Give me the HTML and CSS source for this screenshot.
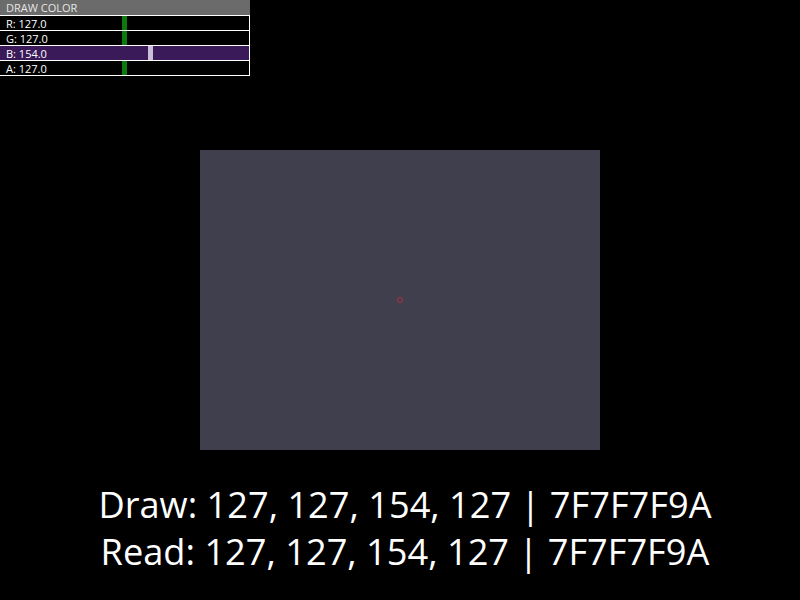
FILE: index.html
```html
<!DOCTYPE html>
<html>
<head>
<meta charset="utf-8">
<link rel="stylesheet" href="styles.css">
</head>
<body>
<div class="screen">
  <div class="panel">
    <div class="panel-title">DRAW COLOR</div>
    <div class="row"><span class="label">R: 127.0</span><span class="knob green" style="left:122px"></span></div>
    <div class="row"><span class="label">G: 127.0</span><span class="knob green" style="left:122px"></span></div>
    <div class="row active"><span class="label">B: 154.0</span><span class="knob light" style="left:148px"></span></div>
    <div class="row"><span class="label">A: 127.0</span><span class="knob green" style="left:122px"></span></div>
  </div>
  <div class="stage">
    <div class="canvas"><div class="cursor"></div></div>
  </div>
  <div class="readout">
    <div class="line">Draw: 127, 127, 154, 127 | 7F7F7F9A</div>
    <div class="line">Read: 127, 127, 154, 127 | 7F7F7F9A</div>
  </div>
</div>
</body>
</html>
```
FILE: styles.css
```css
html, body { margin: 0; padding: 0; background: #000; }
.screen {
  width: 800px; height: 600px; position: relative; overflow: hidden;
  font-family: "Open Sans", "Noto Sans", sans-serif; color: #fff;
}
.panel {
  position: absolute; left: 0; top: 0; width: 250px;
  display: flex; flex-direction: column;
}
.panel-title {
  height: 15px; background: #6b6b6b; color: #e6e6e6;
  font-size: 11px; line-height: 15px; padding-left: 6px;
}
.row {
  position: relative; height: 14px; border-top: 1px solid #fff;
  border-right: 1px solid #fff; background: #000;
  font-size: 11px; line-height: 15px; padding-left: 6px;
}
.row:last-child { border-bottom: 1px solid #fff; }
.row.active { background: #3b1a5a; }
.knob { position: absolute; top: 0; width: 5px; height: 14px; }
.knob.green { background: #0c7a0c; }
.knob.light { background: #cbbfd8; }
.stage {
  position: absolute; left: 200px; top: 150px;
}
.canvas {
  width: 400px; height: 300px; background: #3f3f4d; position: relative;
}
.cursor {
  position: absolute; left: 197px; top: 147px; width: 4px; height: 4px;
  border: 1px solid #b0303a; border-radius: 50%;
}
.readout {
  position: absolute; left: 0; top: 481px; width: 790px; padding-left: 10px;
  text-align: center; font-size: 36.2px; line-height: 47px;
}
```
